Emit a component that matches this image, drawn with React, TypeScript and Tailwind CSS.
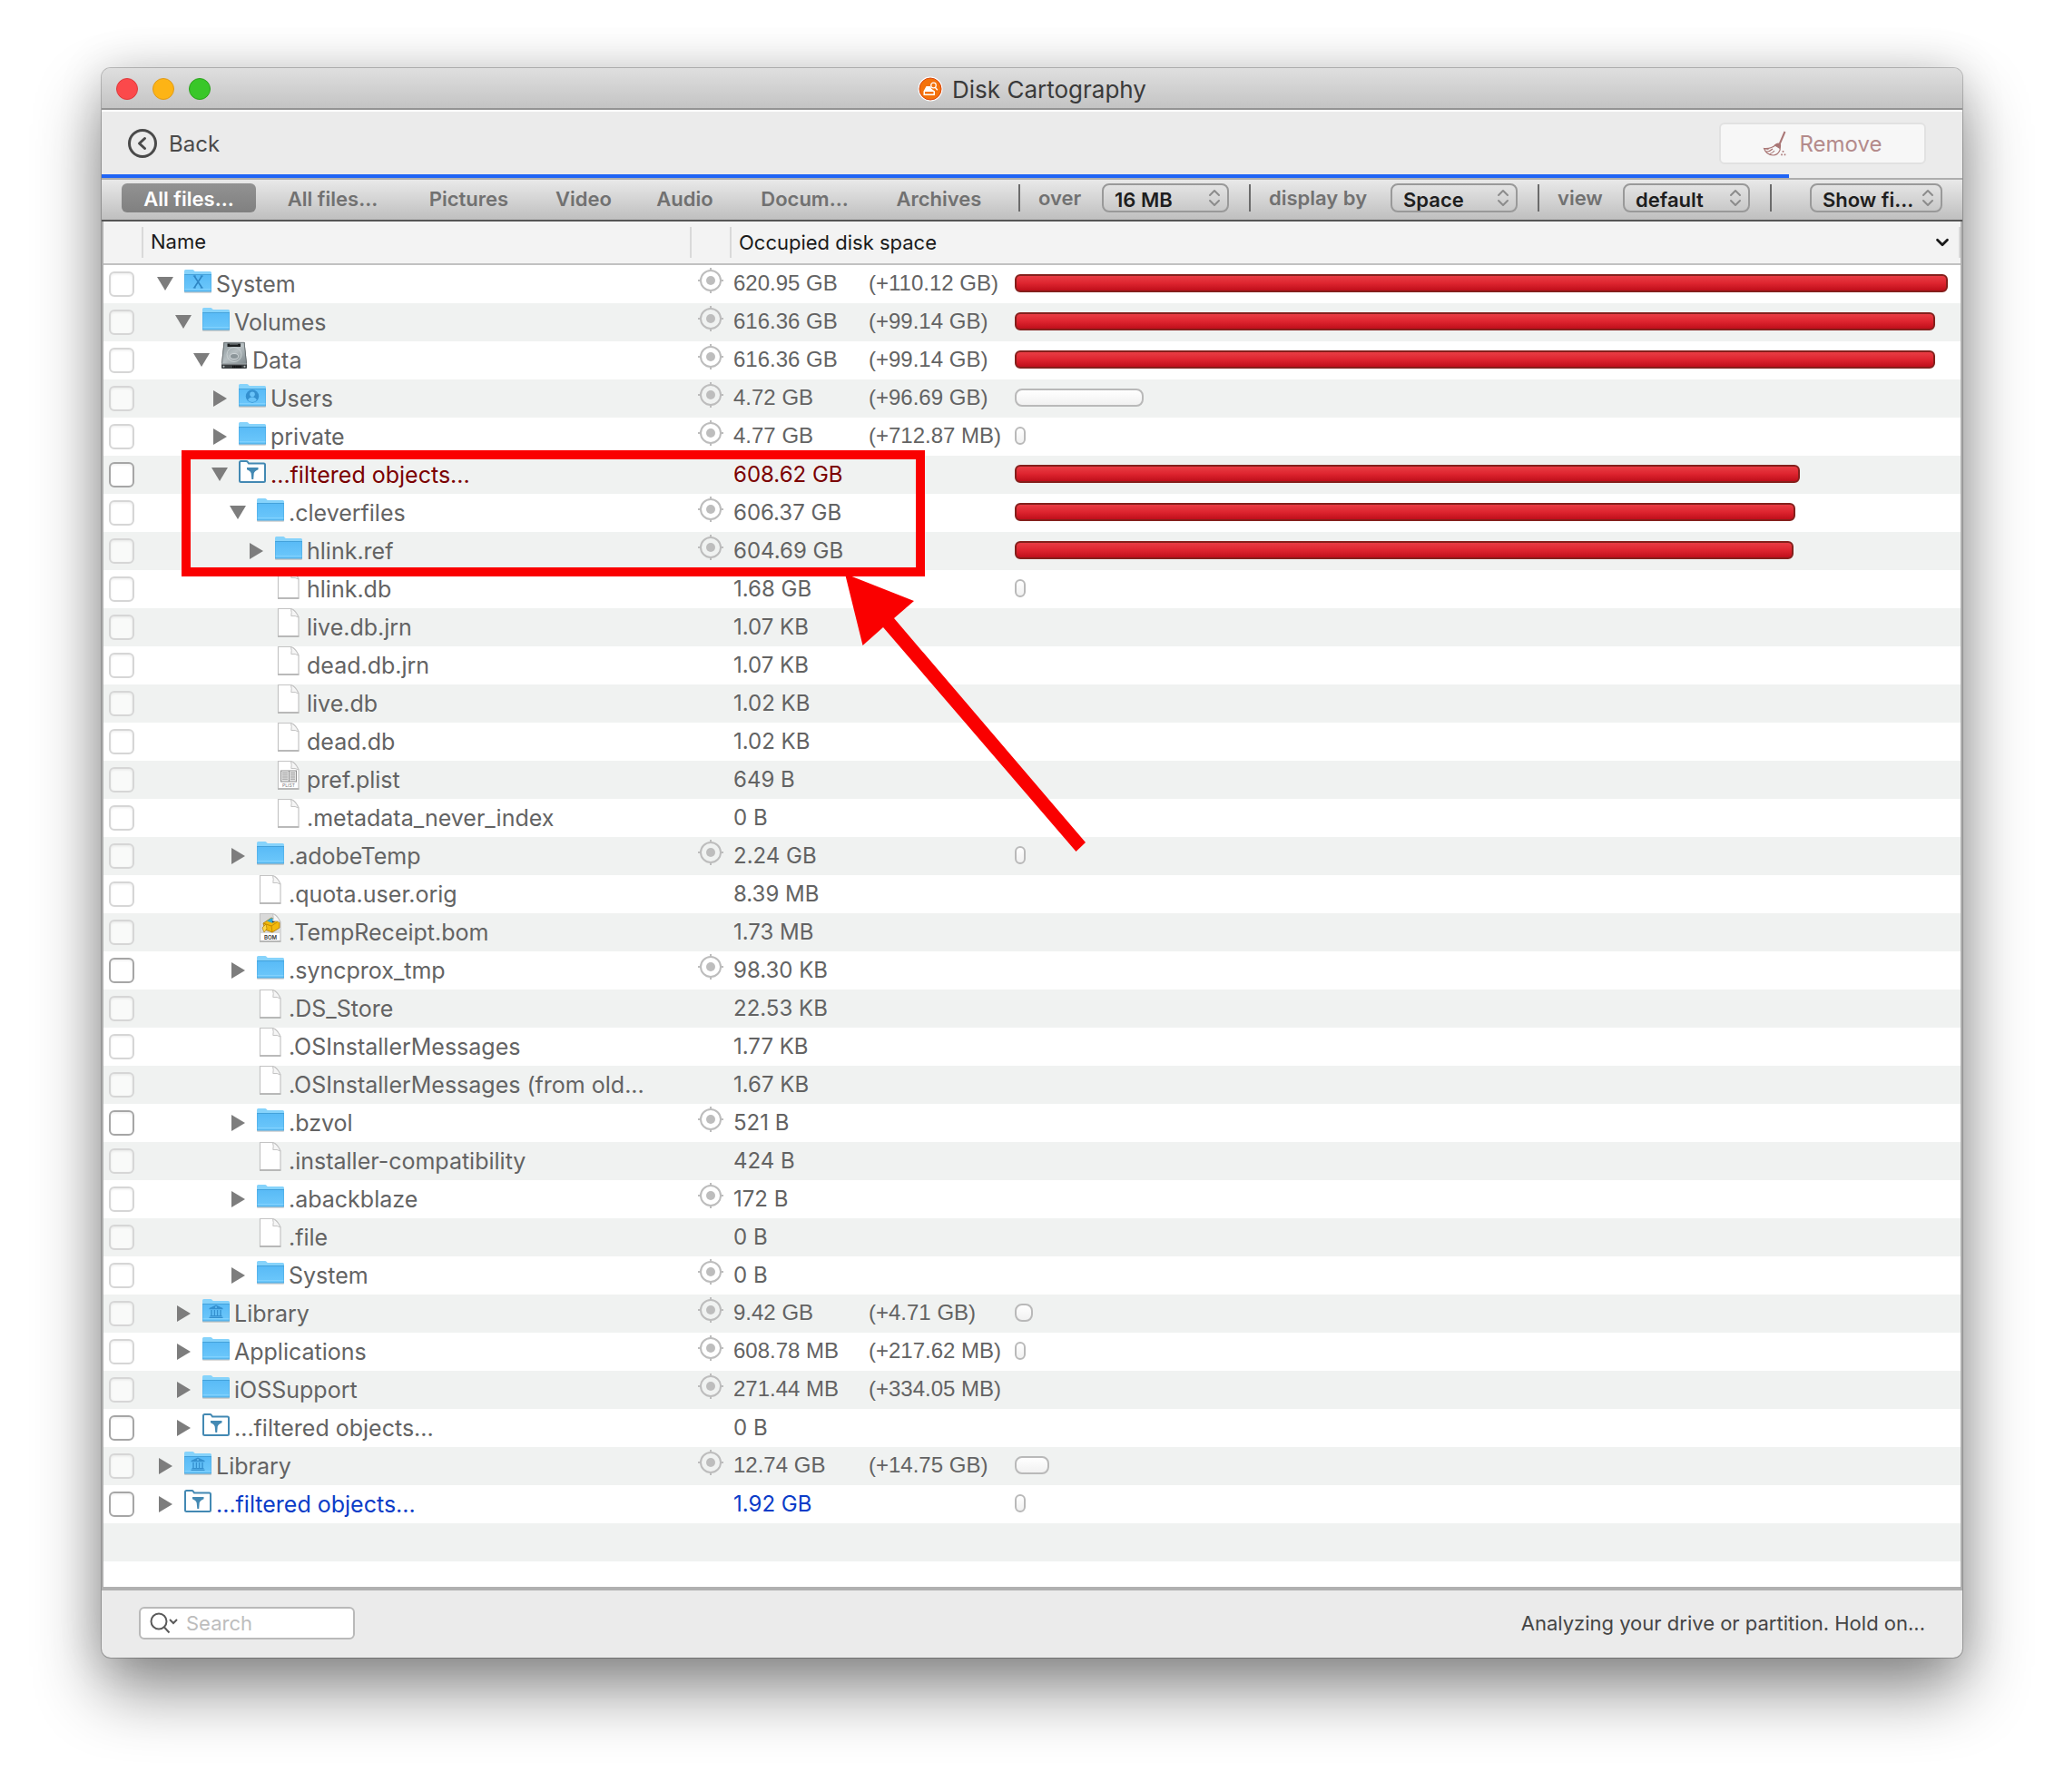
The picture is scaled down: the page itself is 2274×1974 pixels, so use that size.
import React from 'react';
import { ChevronDown, ChevronsUpDown } from 'lucide-react';

type IconKind = 'folder' | 'system' | 'users' | 'library' | 'drive' | 'filtered' | 'file' | 'plist' | 'bom';
type Arrow = 'down' | 'right' | 'none';

interface Entry {
  name: string;
  level: number;
  arrow: Arrow;
  icon: IconKind;
  size: string;
  delta?: string;
  target?: boolean;
  enabled?: boolean;
  // share of the biggest bar, in percent
  bar?: number;
  tone?: 'red' | 'blue';
}

const entries: Entry[] = [
  { name: 'System', level: 0, arrow: 'down', icon: 'system', size: '620.95 GB', delta: '(+110.12 GB)', target: true, bar: 100 },
  { name: 'Volumes', level: 1, arrow: 'down', icon: 'folder', size: '616.36 GB', delta: '(+99.14 GB)', target: true, bar: 98.6 },
  { name: 'Data', level: 2, arrow: 'down', icon: 'drive', size: '616.36 GB', delta: '(+99.14 GB)', target: true, bar: 98.6 },
  { name: 'Users', level: 3, arrow: 'right', icon: 'users', size: '4.72 GB', delta: '(+96.69 GB)', target: true, bar: 13.8 },
  { name: 'private', level: 3, arrow: 'right', icon: 'folder', size: '4.77 GB', delta: '(+712.87 MB)', target: true, bar: 1 },
  { name: '...filtered objects...', level: 3, arrow: 'down', icon: 'filtered', size: '608.62 GB', enabled: true, bar: 84.1, tone: 'red' },
  { name: '.cleverfiles', level: 4, arrow: 'down', icon: 'folder', size: '606.37 GB', target: true, bar: 83.7 },
  { name: 'hlink.ref', level: 5, arrow: 'right', icon: 'folder', size: '604.69 GB', target: true, bar: 83.5 },
  { name: 'hlink.db', level: 5, arrow: 'none', icon: 'file', size: '1.68 GB', bar: 1 },
  { name: 'live.db.jrn', level: 5, arrow: 'none', icon: 'file', size: '1.07 KB' },
  { name: 'dead.db.jrn', level: 5, arrow: 'none', icon: 'file', size: '1.07 KB' },
  { name: 'live.db', level: 5, arrow: 'none', icon: 'file', size: '1.02 KB' },
  { name: 'dead.db', level: 5, arrow: 'none', icon: 'file', size: '1.02 KB' },
  { name: 'pref.plist', level: 5, arrow: 'none', icon: 'plist', size: '649 B' },
  { name: '.metadata_never_index', level: 5, arrow: 'none', icon: 'file', size: '0 B' },
  { name: '.adobeTemp', level: 4, arrow: 'right', icon: 'folder', size: '2.24 GB', target: true, bar: 1 },
  { name: '.quota.user.orig', level: 4, arrow: 'none', icon: 'file', size: '8.39 MB' },
  { name: '.TempReceipt.bom', level: 4, arrow: 'none', icon: 'bom', size: '1.73 MB' },
  { name: '.syncprox_tmp', level: 4, arrow: 'right', icon: 'folder', size: '98.30 KB', target: true, enabled: true },
  { name: '.DS_Store', level: 4, arrow: 'none', icon: 'file', size: '22.53 KB' },
  { name: '.OSInstallerMessages', level: 4, arrow: 'none', icon: 'file', size: '1.77 KB' },
  { name: '.OSInstallerMessages (from old...', level: 4, arrow: 'none', icon: 'file', size: '1.67 KB' },
  { name: '.bzvol', level: 4, arrow: 'right', icon: 'folder', size: '521 B', target: true, enabled: true },
  { name: '.installer-compatibility', level: 4, arrow: 'none', icon: 'file', size: '424 B' },
  { name: '.abackblaze', level: 4, arrow: 'right', icon: 'folder', size: '172 B', target: true },
  { name: '.file', level: 4, arrow: 'none', icon: 'file', size: '0 B' },
  { name: 'System', level: 4, arrow: 'right', icon: 'folder', size: '0 B', target: true },
  { name: 'Library', level: 1, arrow: 'right', icon: 'library', size: '9.42 GB', delta: '(+4.71 GB)', target: true, bar: 1.95 },
  { name: 'Applications', level: 1, arrow: 'right', icon: 'folder', size: '608.78 MB', delta: '(+217.62 MB)', target: true, bar: 1 },
  { name: 'iOSSupport', level: 1, arrow: 'right', icon: 'folder', size: '271.44 MB', delta: '(+334.05 MB)', target: true },
  { name: '...filtered objects...', level: 1, arrow: 'right', icon: 'filtered', size: '0 B', enabled: true },
  { name: 'Library', level: 0, arrow: 'right', icon: 'library', size: '12.74 GB', delta: '(+14.75 GB)', target: true, bar: 3.7 },
  { name: '...filtered objects...', level: 0, arrow: 'right', icon: 'filtered', size: '1.92 GB', enabled: true, bar: 1, tone: 'blue' },
];

const indents = ['pl-[13px]', 'pl-[33px]', 'pl-[53px]', 'pl-[73px]', 'pl-[93px]', 'pl-[113px]'];

const filters = [
  { label: 'All files...', width: 'w-[148px]', active: true },
  { label: 'All files...', width: 'w-[145px]' },
  { label: 'Pictures', width: 'w-[131px]' },
  { label: 'Video', width: 'w-[98px]' },
  { label: 'Audio', width: 'w-[101px]' },
  { label: 'Docum...', width: 'w-[139px]' },
  { label: 'Archives', width: 'w-[133px]' },
];

const Folder = ({ children }: { children?: React.ReactNode }) => (
  <svg width="32" height="28" viewBox="0 0 32 28">
    <defs>
      <linearGradient id="folderFront" x1="0" y1="0" x2="0" y2="1">
        <stop offset="0" stopColor="#58baf6" />
        <stop offset="1" stopColor="#6dc8fb" />
      </linearGradient>
    </defs>
    <rect x="1" y="24" width="30" height="3" rx="1" fill="#000" opacity="0.15" />
    <path d="M1 25V2.5Q1 1 2.500 1h7.500q1 0 2 1.200l.8.800h16.700q1.500 0 1.500 1.500V25z" fill="#86d3fb" />
    <path d="M1 6h30v18.500q0 .800-.8.800H1.800q-.8 0-.8-.8z" fill="url(#folderFront)" />
    <path d="M1 6.500h30M1 25h30" stroke="#3d9ad3" strokeWidth="1" opacity="0.75" />
    <path d="M1 22.500h30" stroke="#8bd6ff" strokeWidth="1" opacity="0.7" />
    <path d="M1.500 6v19M30.500 6v19" stroke="#46a5dd" strokeWidth="1" opacity="0.4" />
    {children}
  </svg>
);

const FileShape = ({ children }: { children?: React.ReactNode }) => (
  <svg width="32" height="38" viewBox="0 0 32 38">
    <path d="M4.500 1.500h14q5 1 8.500 9.500v20.500h-22.500z" fill="#fff" stroke="#c4c4c4" strokeWidth="1.200" />
    <path d="M4 32.200h23.500" stroke="#a9a9a9" strokeWidth="1.200" />
    {children}
    <path d="M18.500 1.500q1.200 4 .3 8 4.500-.8 8.200 1.500-3-7-8.500-9.500z" fill="#f6f6f6" stroke="#c4c4c4" strokeWidth="1" />
  </svg>
);

const EntryIcon = ({ kind }: { kind: IconKind }) => {
  switch (kind) {
    case 'system':
      return (
        <Folder>
          <path d="M12 8l8.500 13M20.500 8L12 21" stroke="#2f86c4" strokeWidth="1.600" fill="none" />
          <path d="M10.800 8h3M18.800 8h3M10.800 21h3M18.800 21h3" stroke="#2f86c4" strokeWidth="1.200" />
        </Folder>
      );
    case 'users':
      return (
        <Folder>
          <circle cx="16" cy="14.500" r="7.200" fill="#3490cf" />
          <circle cx="16" cy="12.200" r="2.800" fill="#69c3f8" />
          <path d="M11 18.800q.8-2.500 3.800-3.300h2.400q3 .8 3.800 3.300-2 2.200-5 2.200t-5-2.200z" fill="#69c3f8" />
        </Folder>
      );
    case 'library':
      return (
        <Folder>
          <path d="M16 7.500l7.500 3.500v1.200h-15V11z" fill="#3490cf" />
          <path d="M11 13v6M14.400 13v6M17.600 13v6M21 13v6" stroke="#3490cf" strokeWidth="1.400" />
          <path d="M9.500 19.600h13M8.500 21.300h15" stroke="#3490cf" strokeWidth="1.200" />
          <circle cx="16" cy="10" r="0.900" fill="#69c3f8" />
        </Folder>
      );
    case 'filtered':
      return (
        <svg width="32" height="28" viewBox="0 0 32 28">
          <path d="M2 23.500V3.500Q2 2 3.500 2h5.800q1 0 1.700 1l1 1.500h16.500Q30 4.500 30 6v17.500q0 1.500-1.500 1.500h-25Q2 25 2 23.500z" fill="#fff" stroke="#4389b3" strokeWidth="2" />
          <path d="M10 9h12.500v2.200q-4.500 2-4.800 4.300L17.200 22h-1.900l-.6-6.500q-.3-2.300-4.700-4.300z" fill="#4389b3" />
        </svg>
      );
    case 'drive':
      return (
        <svg width="32" height="36" viewBox="0 0 32 36">
          <defs>
            <linearGradient id="driveTop" x1="0" y1="0" x2="1" y2="1">
              <stop offset="0" stopColor="#8d989c" />
              <stop offset="0.500" stopColor="#b7bfc2" />
              <stop offset="1" stopColor="#7d878b" />
            </linearGradient>
          </defs>
          <path d="M4.500 1h23l2.500 24v4q0 1-1 1H3q-1 0-1-1v-4z" fill="#3b3f41" />
          <path d="M5 1.200h22l2.500 23.500h-27z" fill="url(#driveTop)" stroke="#6d7679" strokeWidth="0.600" />
          <rect x="8.500" y="2.500" width="14.500" height="3.500" fill="#1c1f20" />
          <path d="M11 3.200h9" stroke="#7e8789" strokeWidth="0.800" />
          <circle cx="16" cy="14.500" r="8" fill="none" stroke="#cdd4d6" strokeWidth="0.800" />
          <ellipse cx="16" cy="16.500" rx="4.500" ry="3" fill="#8b9599" stroke="#dce1e3" strokeWidth="0.800" />
          <path d="M2.300 25h27.400" stroke="#c8ced0" strokeWidth="0.800" />
          <path d="M14 28h10" stroke="#0d0e0f" strokeWidth="2.400" strokeDasharray="1.500 0.600" />
          <circle cx="4.500" cy="27.800" r="1" fill="#b8bfc1" />
          <circle cx="27.500" cy="27.800" r="1" fill="#b8bfc1" />
        </svg>
      );
    case 'plist':
      return (
        <FileShape>
          <rect x="7.500" y="12" width="17" height="12" fill="#e6e6e6" stroke="#8f8f8f" strokeWidth="1" />
          <path d="M9 14.500h6M9 16.800h6M9 19h6M9 21.200h6M18 14.500h5M18 16.800h5M18 19h5M18 21.200h5" stroke="#999" strokeWidth="1" />
          <path d="M16.500 12v12" stroke="#8f8f8f" strokeWidth="1" />
          <text x="16" y="30" textAnchor="middle" fontSize="5" fontFamily="Inter, sans-serif" fill="#777">PLIST</text>
        </FileShape>
      );
    case 'bom':
      return (
        <FileShape>
          <path d="M5 2h13l8.500 9v12H5z" fill="#d9d9d9" />
          <path d="M8 12l9-6 9 3v8l-8 5-8-3z" fill="#f2b90c" stroke="#a87400" strokeWidth="0.800" />
          <path d="M8 12l9 3 9-6M17 15l1 7" stroke="#c58b00" strokeWidth="1" fill="none" />
          <path d="M12 9.500l5-3.300 6 2-5 3.600z" fill="#2fa8dc" />
          <path d="M18 10.500l5-2" stroke="#222" strokeWidth="1.500" />
          <path d="M7 17l4-4 1 5-3 4z" fill="#ffd84a" stroke="#a87400" strokeWidth="0.600" />
          <text x="16" y="30" textAnchor="middle" fontSize="6" fontWeight="600" fontFamily="Inter, sans-serif" fill="#333">BOM</text>
        </FileShape>
      );
    case 'file':
      return <FileShape />;
    default:
      return <Folder />;
  }
};

const Triangle = ({ arrow }: { arrow: Arrow }) => {
  if (arrow === 'none') return <span className="w-[18px]" />;
  return (
    <button type="button" aria-label={arrow === 'down' ? 'Collapse' : 'Expand'} className="block w-[18px]">
      <svg width="18" height="18" viewBox="0 0 18 18" fill="#7d7d7d">
        {arrow === 'down' ? <path d="M0 1h18L9 16z" /> : <path d="M2 0v18l15-9z" />}
      </svg>
    </button>
  );
};

const Target = () => (
  <svg width="28" height="28" viewBox="0 0 28 28" className="block" fill="none" stroke="#bdbdbd">
    <circle cx="14" cy="14" r="11" strokeWidth="2" />
    <circle cx="14" cy="14" r="5" fill="#bdbdbd" stroke="none" />
    <path d="M14 0v4M14 24v4M0 14h4M24 14h4" strokeWidth="2" />
  </svg>
);

const Bar = ({ value }: { value: number }) => (
  <div
    className={`h-5 min-w-3 border-2 ${
      value > 50
        ? 'rounded-md border-[#84201c] bg-linear-to-b from-[#e93c44] via-[#de242f] to-[#bf0d1a]'
        : 'rounded-lg border-[#b9b9b9] bg-linear-to-b from-white to-[#f1f1f1]'
    }`}
    style={{ width: `${value}%` }}
  />
);

const Row = ({ entry, index }: { entry: Entry; index: number }) => {
  const tone = entry.tone === 'red' ? 'text-[#7b0000]' : entry.tone === 'blue' ? 'text-[#0a3cc8]' : 'text-[#636363]';
  return (
    <tr className={`h-[42px] ${index % 2 ? 'bg-[#f0f2f1]' : 'bg-white'}`}>
      <td className="p-0 pl-1.5">
        <input
          type="checkbox"
          aria-label={`Select ${entry.name}`}
          className={`block size-7 appearance-none rounded-md border-2 shadow-[inset_0_1px_3px_rgba(0,0,0,0.08)] ${
            entry.enabled ? 'border-[#a6a6a6] bg-white' : 'border-[#d6d6d6] bg-white/60'
          }`}
        />
      </td>
      <td className="p-0">
        <div className={`flex h-[42px] items-center ${indents[entry.level]}`}>
          <Triangle arrow={entry.arrow} />
          <span className="ml-[11px] flex h-[38px] w-8 items-center pb-1.5">
            <EntryIcon kind={entry.icon} />
          </span>
          <span className={`ml-1 text-[25px] leading-8 whitespace-nowrap ${tone}`}>{entry.name}</span>
        </div>
      </td>
      <td className="p-0 pb-2 pl-[9px]">{entry.target && <Target />}</td>
      <td className="p-0 pb-0.5">
        <div className="flex items-center">
          <span
            className={`w-[153px] pl-1 whitespace-nowrap ${tone} ${
              entry.delta ? "font-['Liberation_Sans',sans-serif] text-2xl" : 'pt-0.5 text-2xl'
            }`}
          >
            {entry.size}
          </span>
          <span className="w-[161px] font-['Liberation_Sans',sans-serif] text-2xl whitespace-nowrap text-[#636363]">
            {entry.delta}
          </span>
          <div className="flex-1 pr-3.5">{entry.bar !== undefined && <Bar value={entry.bar} />}</div>
        </div>
      </td>
    </tr>
  );
};

const Divider = ({ className = '' }: { className?: string }) => <span className={`h-[30px] w-0.5 bg-[#6b6b6b] ${className}`} />;

const Picker = ({ label, value, width }: { label: string; value: string; width: string }) => (
  <span className={`relative block ${width}`}>
    <select
      aria-label={label}
      className="block h-8 w-full appearance-none rounded-lg border-2 border-[#999] pt-0.5 pl-3 text-[22px] leading-7 font-semibold text-[#1e1e1e]"
    >
      <option>{value}</option>
    </select>
    <ChevronsUpDown size={24} strokeWidth={2} className="pointer-events-none absolute top-1 right-1 text-[#8c8c8c]" />
  </span>
);

const TitleBar = () => (
  <header className="relative flex h-[46px] items-center justify-center rounded-t-[10px] border-b-2 border-[#939393] bg-linear-to-b from-[#dfdfdf] to-[#c4c4c4] pt-0.5">
    <div className="absolute top-[11px] left-4 flex gap-4">
      <button type="button" aria-label="Close" className="size-6 rounded-full border border-[#de3a3c] bg-[#fb494b]" />
      <button type="button" aria-label="Minimize" className="size-6 rounded-full border border-[#df9a1a] bg-[#fdb415]" />
      <button type="button" aria-label="Zoom" className="size-6 rounded-full border border-[#2ba21c] bg-[#39c729]" />
    </div>
    <svg width="28" height="28" viewBox="0 0 28 28" className="mr-2.5">
      <circle cx="14" cy="14" r="13.500" fill="#fff" />
      <circle cx="14" cy="14" r="12" fill="#f4720b" stroke="#d9480f" strokeWidth="1" />
      <path d="M9.500 11h4.500l1.500 3 3.500 2.500V21h-12.500v-4.500z" fill="#fff" />
      <path d="M8 17h9.500v2.500H8z" fill="#f4720b" />
      <circle cx="17.500" cy="10" r="2.800" fill="#f4720b" stroke="#fff" strokeWidth="1.200" />
      <path d="M19.300 12.300l2.500 3" stroke="#fff" strokeWidth="1.400" />
    </svg>
    <h1 className="pt-0.5 text-[26px] leading-8 text-[#3a3a3a]">Disk Cartography</h1>
  </header>
);

const Toolbar = () => (
  <div className="flex h-[71px] items-center justify-between border-t-2 border-white bg-[#ebebeb] pr-10 pl-7">
    <button type="button" className="flex items-center gap-3 text-2xl text-[#4a4a4a]">
      <svg width="34" height="34" viewBox="0 0 34 34" fill="none" stroke="#4a4a4a" strokeWidth="3" strokeLinecap="round" strokeLinejoin="round">
        <circle cx="17" cy="17" r="14.500" />
        <path d="M19.500 11.500L13.500 17l6 5.500" />
      </svg>
      <span className="pt-0.5">Back</span>
    </button>
    <button
      type="button"
      className="flex h-[46px] w-[228px] items-center justify-center gap-3.5 rounded-md border-2 border-[#e1e1e1] bg-[#f7f7f7] text-2xl text-[#b48b8b]"
    >
      <svg width="26" height="28" viewBox="0 0 26 28" fill="none" stroke="#a97675" strokeWidth="1.200">
        <path d="M24.500 1l-6 14" strokeWidth="2" />
        <path d="M15.500 15q2.500-.5 4 1.500l-.5 5q-2.500 5.500-7.500 5.500Q4 26.500 1.500 19.500q7 1 14-4.500z" />
        <path d="M15.500 14.500q2.500-1 4 1l-1 3.500-5-3z" fill="#a97675" />
        <path d="M4 23q4 0 7-3M8 25.500q3-1 5-3.500M1.500 19.500l5 1" strokeWidth="1.200" />
        <path d="M22.500 22v1.800M21 25.500v1.800M24.500 25.500v1.800" strokeWidth="1.600" />
      </svg>
      <span className="pt-0.5">Remove</span>
    </button>
  </div>
);

const FilterBar = () => (
  <div className="flex h-[46px] items-center border-b-2 border-[#555] bg-linear-to-b from-[#e9e9e9] to-[#bfbfbf] pb-1 pr-[22px] pl-[22px] text-[22px] leading-7 font-semibold text-[#717171]">
    <nav className="flex gap-3">
      {filters.map((filter, i) => (
        <button
          key={i}
          type="button"
          className={`h-8 rounded-md pt-0.5 ${filter.width} ${filter.active ? 'bg-linear-to-b from-[#929292] to-[#808080] text-white' : ''}`}
        >
          {filter.label}
        </button>
      ))}
    </nav>
    <Divider className="ml-[21px]" />
    <span className="w-[90px] pl-5">over</span>
    <Picker label="over" value="16 MB" width="w-[140px]" />
    <Divider className="ml-[22px]" />
    <span className="w-[154px] pl-5 whitespace-nowrap">display by</span>
    <Picker label="display by" value="Space" width="w-[140px]" />
    <Divider className="ml-[22px]" />
    <span className="w-[92px] pl-5">view</span>
    <Picker label="view" value="default" width="w-[140px]" />
    <Divider className="mr-auto ml-[22px]" />
    <Picker label="Show files" value="Show fi..." width="w-[146px]" />
  </div>
);

const Annotation = () => (
  <div className="pointer-events-none absolute top-[252px] left-[86px]">
    <div className="h-[139px] w-[819px] border-[10px] border-[#fa0000]" />
    <svg width="280" height="320" viewBox="0 0 280 320" className="absolute top-[136px] left-[730px]">
      <path d="M1 0L77 30 55 49 266 296 255.500 306 43 59 20.500 79z" fill="#fa0000" />
    </svg>
  </div>
);

export default function App() {
  return (
    <main className="min-h-screen bg-white px-28 pt-[75px] pb-[148px] font-[Inter,sans-serif]">
      <div className="rounded-[10px] bg-[#ebebeb] shadow-[0_0_0_1px_rgba(0,0,0,0.22),0_36px_72px_rgba(0,0,0,0.45),0_0_50px_rgba(0,0,0,0.14)]">
        <TitleBar />
        <Toolbar />
        <div className="h-1 bg-[#ebebeb]">
          <div className="h-1 bg-[#2065f5]" style={{ width: '90.7%' }} />
        </div>
        <div className="border-t-2 border-[#adadad]">
          <FilterBar />
        </div>
        <div className="relative overflow-hidden border-x-2 border-b-4 border-[#b0b0b0] bg-white">
          <table className="w-full table-fixed border-collapse text-left">
            <colgroup>
              <col className="w-[46px]" />
              <col className="w-[600px]" />
              <col className="w-[44px]" />
              <col />
            </colgroup>
            <thead>
              <tr className="h-[47px] border-b-2 border-[#c2c2c2] bg-[#f3f3f3] text-[22px] text-[#1a1a1a]">
                <th className="p-0" aria-label="Selected" />
                <th className="p-0 font-normal">
                  <div className="-mr-0.5 -ml-1 h-[34px] border-x-2 border-[#d9d9d9] pl-2 leading-8">Name</div>
                </th>
                <th className="p-0" aria-label="Reveal" />
                <th className="p-0 font-normal">
                  <div className="flex h-[34px] items-center justify-between border-x-2 border-[#d9d9d9] pr-[7px] pl-2 leading-8">
                    Occupied disk space
                    <ChevronDown size={22} strokeWidth={3} />
                  </div>
                </th>
              </tr>
            </thead>
            <tbody>
              {entries.map((entry, i) => (
                <Row key={i} entry={entry} index={i} />
              ))}
            </tbody>
          </table>
          <div className="h-[42px] bg-[#f0f2f1]" />
          <div className="h-7" />
          <Annotation />
        </div>
        <footer className="flex h-[74px] items-center justify-between px-[41px] pb-0.5 text-[22px] text-[#454545]">
          <label className="flex h-9 w-[238px] items-center rounded-md border-2 border-[#b9b9b9] bg-white pl-2.5">
            <svg width="32" height="26" viewBox="0 0 32 26" fill="none" stroke="#5a5a5a" strokeWidth="2" className="shrink-0">
              <circle cx="10" cy="11" r="8.500" />
              <path d="M16 17.500l5.500 6" />
              <path d="M22 9l4 4 4-4" />
            </svg>
            <input type="search" aria-label="Search" placeholder="Search" className="ml-2 w-full min-w-0 outline-none placeholder:text-[#bdbdbd]" />
          </label>
          <p>Analyzing your drive or partition. Hold on...</p>
        </footer>
      </div>
    </main>
  );
}
